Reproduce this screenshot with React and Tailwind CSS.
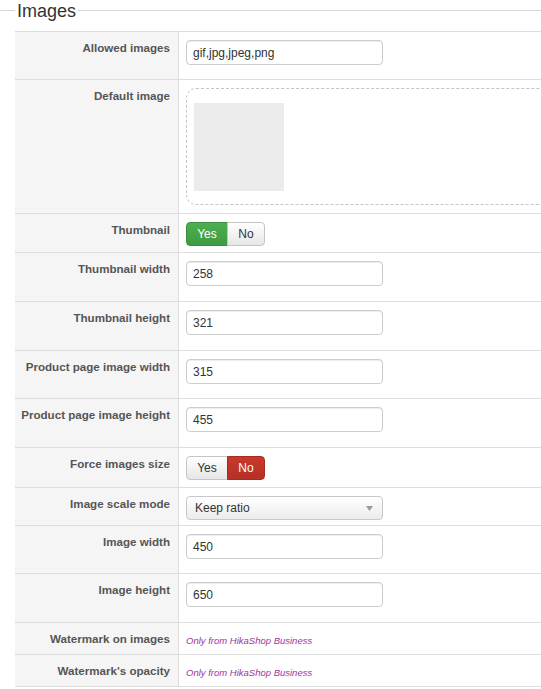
import React from "react";

const font = { fontFamily: '"Liberation Sans", Arial, Helvetica, sans-serif' };

function Row({ label, children, pb = "pb-[15px]" }) {
  return (
    <div className="grid grid-cols-[164px_1fr] border-b border-[#dddddd]">
      <div className="bg-[#f5f5f5] border-r border-[#dddddd] pt-[8px] pr-[8px] text-right text-[11.6px] leading-[16px] font-bold text-[#555555]">
        {label}
      </div>
      <div className={`pl-[7px] pt-[8px] ${pb}`}>{children}</div>
    </div>
  );
}

function TextInput({ value }) {
  return (
    <div className="w-[197px] h-[25px] border border-[#cccccc] rounded-[4px] bg-white px-[6px] flex items-center text-[12px] text-[#333333] shadow-[inset_0_1px_1px_rgba(0,0,0,0.075)]">
      {value}
    </div>
  );
}

function YesNo({ on }) {
  const base = "h-[24px] flex items-center justify-center text-[12px] border";
  const off = "bg-gradient-to-b from-white to-[#e6e6e6] text-[#333333] border-[#c5c5c5]";
  return (
    <div className="flex">
      <div
        className={`${base} w-[42px] rounded-l-[4px] ${
          on ? "bg-gradient-to-b from-[#4caf50] to-[#3f9a42] text-white border-[#3b8f3e]" : off
        }`}
      >
        Yes
      </div>
      <div
        className={`${base} w-[38px] -ml-px rounded-r-[4px] ${
          on ? off : "bg-gradient-to-b from-[#c9392c] to-[#b53025] text-white border-[#a82b22]"
        }`}
      >
        No
      </div>
    </div>
  );
}

function Business() {
  return (
    <span className="block pt-[3px] text-[9.5px] leading-[14px] italic text-[#a6309c]">
      Only from HikaShop Business
    </span>
  );
}

export default function App() {
  return (
    <div className="w-[541px] h-[689px] overflow-hidden bg-white" style={font}>
      <div className="flex items-center h-[21px]">
        <div className="w-[15px] h-px bg-[#d6d6d6]" />
        <span className="px-[2px] text-[18px] leading-[20px] text-[#333333]">Images</span>
        <div className="flex-1 h-px bg-[#d6d6d6]" />
      </div>

      <div className="ml-[15px] mt-[10px] w-[620px] border-t border-[#dddddd]">
        <Row label="Allowed images" pb="pb-[14px]">
          <TextInput value="gif,jpg,jpeg,png" />
        </Row>

        <Row label="Default image" pb="pb-[8px]">
          <div className="w-[420px] h-[117px] border border-dashed border-[#c4c4c4] rounded-[10px] pl-[7px] pt-[14px]">
            <div className="w-[90px] h-[88px] bg-[#ebebeb]" />
          </div>
        </Row>

        <Row label="Thumbnail" pb="pb-[6px]">
          <YesNo on />
        </Row>

        <Row label="Thumbnail width">
          <TextInput value="258" />
        </Row>
        <Row label="Thumbnail height">
          <TextInput value="321" />
        </Row>
        <Row label="Product page image width" pb="pb-[14px]">
          <TextInput value="315" />
        </Row>
        <Row label="Product page image height">
          <TextInput value="455" />
        </Row>

        <Row label="Force images size" pb="pb-[7px]">
          <YesNo on={false} />
        </Row>

        <Row label="Image scale mode" pb="pb-[5px]">
          <div className="w-[197px] h-[24px] border border-[#c8c8c8] rounded-[4px] bg-gradient-to-b from-white to-[#ececec] pl-[8px] pr-[9px] flex items-center justify-between text-[12px] text-[#333333]">
            <span>Keep ratio</span>
            <svg width="7" height="5" viewBox="0 0 7 5">
              <path d="M0 0h7L3.5 5z" fill="#9a9a9a" />
            </svg>
          </div>
        </Row>

        <Row label="Image width" pb="pb-[14px]">
          <TextInput value="450" />
        </Row>
        <Row label="Image height">
          <TextInput value="650" />
        </Row>

        <Row label="Watermark on images" pb="pb-[6px]">
          <Business />
        </Row>
        <Row label="Watermark's opacity" pb="pb-[6px]">
          <Business />
        </Row>
      </div>
    </div>
  );
}
